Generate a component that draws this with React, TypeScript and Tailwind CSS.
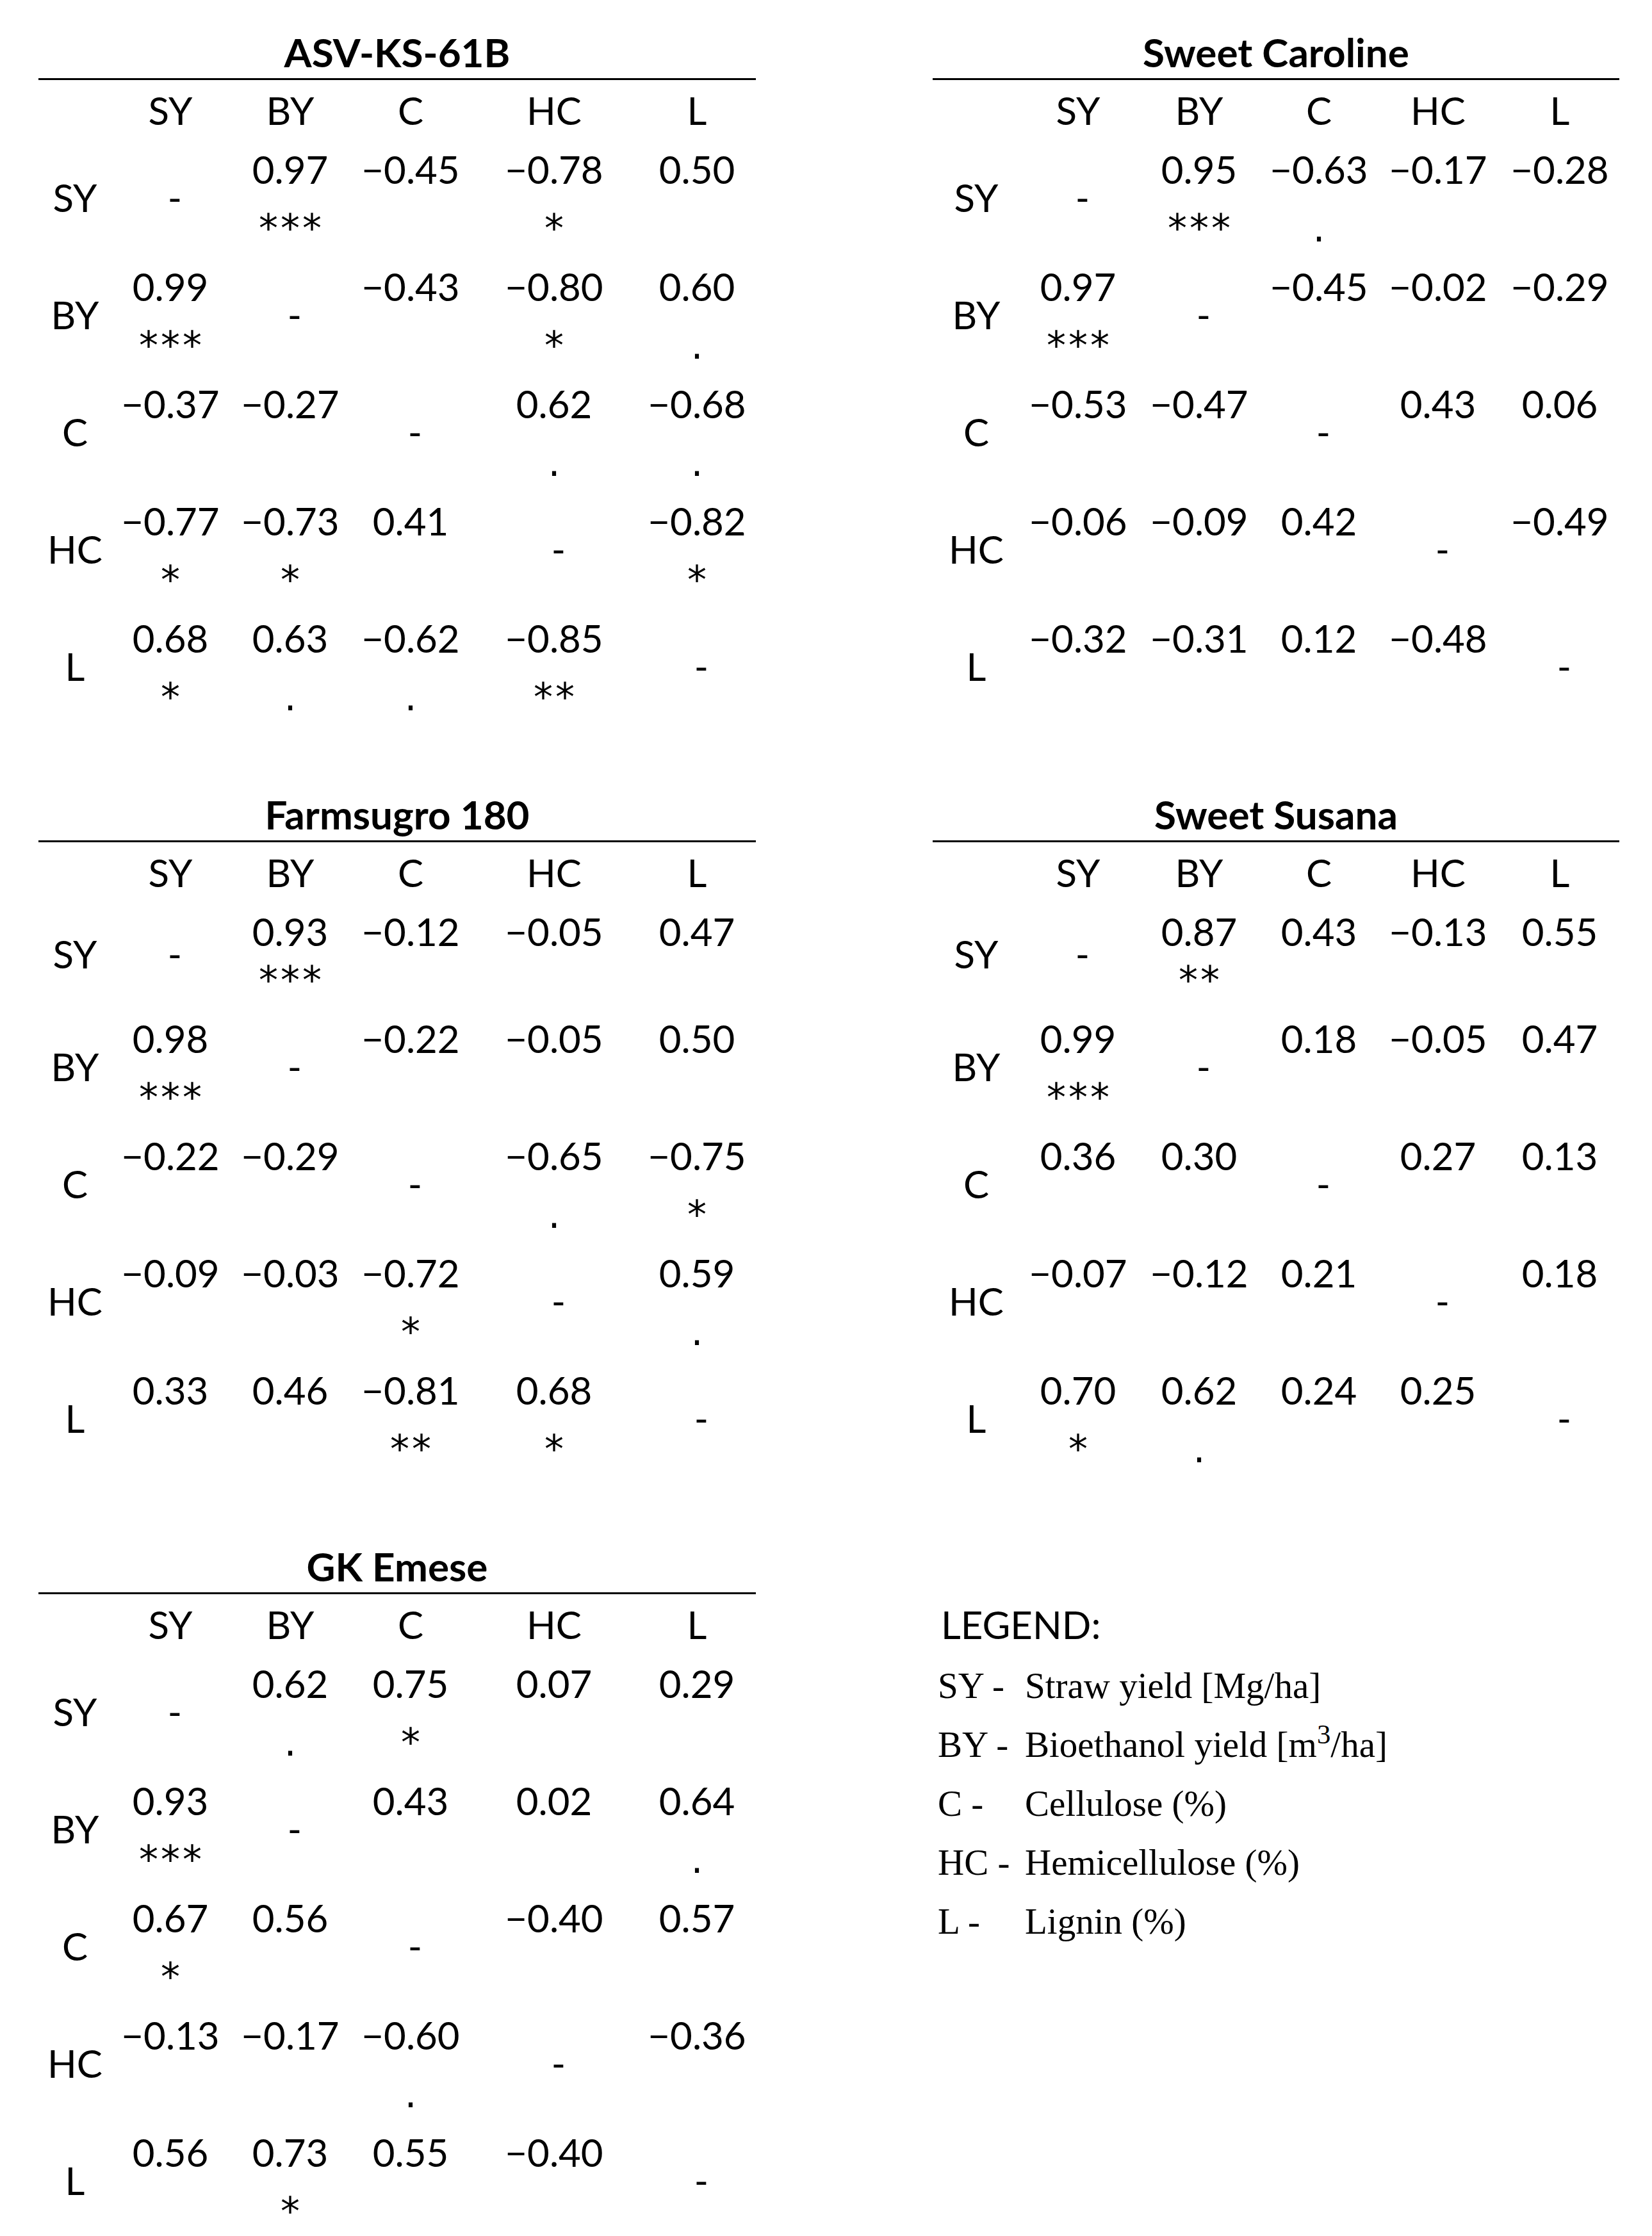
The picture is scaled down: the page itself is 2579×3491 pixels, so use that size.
const LABELS = ['SY', 'BY', 'C', 'HC', 'L'];

const LEFT_COLS = 'grid grid-cols-[114px_184px_190px_186px_262px_184px]';
const RIGHT_COLS = 'grid grid-cols-[136px_182px_196px_178px_194px_186px]';

// each cell: "-" for the diagonal, otherwise "value" or "value mark"
const TABLES = {
    asv: [
        ['-', '0.97 ***', '−0.45', '−0.78 *', '0.50'],
        ['0.99 ***', '-', '−0.43', '−0.80 *', '0.60 .'],
        ['−0.37', '−0.27', '-', '0.62 .', '−0.68 .'],
        ['−0.77 *', '−0.73 *', '0.41', '-', '−0.82 *'],
        ['0.68 *', '0.63 .', '−0.62 .', '−0.85 **', '-'],
    ],
    caroline: [
        ['-', '0.95 ***', '−0.63 .', '−0.17', '−0.28'],
        ['0.97 ***', '-', '−0.45', '−0.02', '−0.29'],
        ['−0.53', '−0.47', '-', '0.43', '0.06'],
        ['−0.06', '−0.09', '0.42', '-', '−0.49'],
        ['−0.32', '−0.31', '0.12', '−0.48', '-'],
    ],
    farmsugro: [
        ['-', '0.93 ***', '−0.12', '−0.05', '0.47'],
        ['0.98 ***', '-', '−0.22', '−0.05', '0.50'],
        ['−0.22', '−0.29', '-', '−0.65 .', '−0.75 *'],
        ['−0.09', '−0.03', '−0.72 *', '-', '0.59 .'],
        ['0.33', '0.46', '−0.81 **', '0.68 *', '-'],
    ],
    susana: [
        ['-', '0.87 **', '0.43', '−0.13', '0.55'],
        ['0.99 ***', '-', '0.18', '−0.05', '0.47'],
        ['0.36', '0.30', '-', '0.27', '0.13'],
        ['−0.07', '−0.12', '0.21', '-', '0.18'],
        ['0.70 *', '0.62 .', '0.24', '0.25', '-'],
    ],
    emese: [
        ['-', '0.62 .', '0.75 *', '0.07', '0.29'],
        ['0.93 ***', '-', '0.43', '0.02', '0.64 .'],
        ['0.67 *', '0.56', '-', '−0.40', '0.57'],
        ['−0.13', '−0.17', '−0.60 .', '-', '−0.36'],
        ['0.56', '0.73 *', '0.55', '−0.40', '-'],
    ],
};

const LEGEND = [
    ['SY -', <>Straw yield [Mg/ha]</>],
    ['BY -', <>Bioethanol yield [m<sup>3</sup>/ha]</>],
    ['C -', <>Cellulose (%)</>],
    ['HC -', <>Hemicellulose (%)</>],
    ['L -', <>Lignin (%)</>],
] as const;

function ValueCell({ cell, short }: { cell: string; short: boolean }) {
    if (cell === '-') {
        return (
            <div className={`pl-[14px] text-center ${short ? 'pt-[46px]' : 'pt-[55px]'}`}>-</div>
        );
    }

    const [value, mark] = cell.split(' ');

    return (
        <div className="flex flex-col items-center pt-[11px]">
            <span>{value}</span>
            {mark ? (
                <span
                    className={`pl-[4px] font-['DejaVu_Sans',sans-serif] tracking-[4px] ${short ? '-mt-[5px]' : 'mt-[11px]'}`}
                >
                    {mark}
                </span>
            ) : null}
        </div>
    );
}

function CorrTable({
    title,
    rows,
    cols,
    shortFirst = false,
}: {
    title: string;
    rows: string[][];
    cols: string;
    shortFirst?: boolean;
}) {
    return (
        <div>
            <div className="border-b-[3px] border-black text-center text-[62px] font-bold">
                {title}
            </div>
            <div className={`mt-[7px] ${cols}`}>
                <div />
                {LABELS.map((label) => (
                    <div key={label} className="text-center">
                        {label}
                    </div>
                ))}
            </div>
            {rows.map((row, rowIndex) => {
                const short = shortFirst && rowIndex === 0;

                return (
                    <div key={rowIndex} className={`${cols} ${short ? 'h-[167px]' : 'h-[183px]'}`}>
                        <div className={`text-center ${short ? 'pt-[46px]' : 'pt-[55px]'}`}>
                            {LABELS[rowIndex]}
                        </div>
                        {row.map((cell, colIndex) => (
                            <ValueCell key={colIndex} cell={cell} short={short} />
                        ))}
                    </div>
                );
            })}
        </div>
    );
}

export default function App() {
    return (
        <div className="min-h-[3491px] w-[2579px] bg-white font-['Lato','Liberation_Sans',sans-serif] text-[60px] leading-[81px] text-black">
            <div className="grid grid-cols-[1120px_1072px] items-start gap-x-[276px] gap-y-[103px] pt-[41px] pl-[60px]">
                <CorrTable title="ASV-KS-61B" rows={TABLES.asv} cols={LEFT_COLS} />
                <CorrTable title="Sweet Caroline" rows={TABLES.caroline} cols={RIGHT_COLS} />
                <CorrTable
                    title="Farmsugro 180"
                    rows={TABLES.farmsugro}
                    cols={LEFT_COLS}
                    shortFirst
                />
                <CorrTable
                    title="Sweet Susana"
                    rows={TABLES.susana}
                    cols={RIGHT_COLS}
                    shortFirst
                />
                <CorrTable title="GK Emese" rows={TABLES.emese} cols={LEFT_COLS} />

                <div className="pt-[91px]">
                    <div className="pl-[13px]">LEGEND:</div>
                    <div className="mt-[9px] pl-[8px] font-['Liberation_Serif','Times_New_Roman',serif] text-[57px] leading-[92px]">
                        {LEGEND.map(([abbr, desc]) => (
                            <div key={abbr} className="flex">
                                <span className="w-[136px] shrink-0">{abbr}</span>
                                <span>{desc}</span>
                            </div>
                        ))}
                    </div>
                </div>
            </div>
        </div>
    );
}
